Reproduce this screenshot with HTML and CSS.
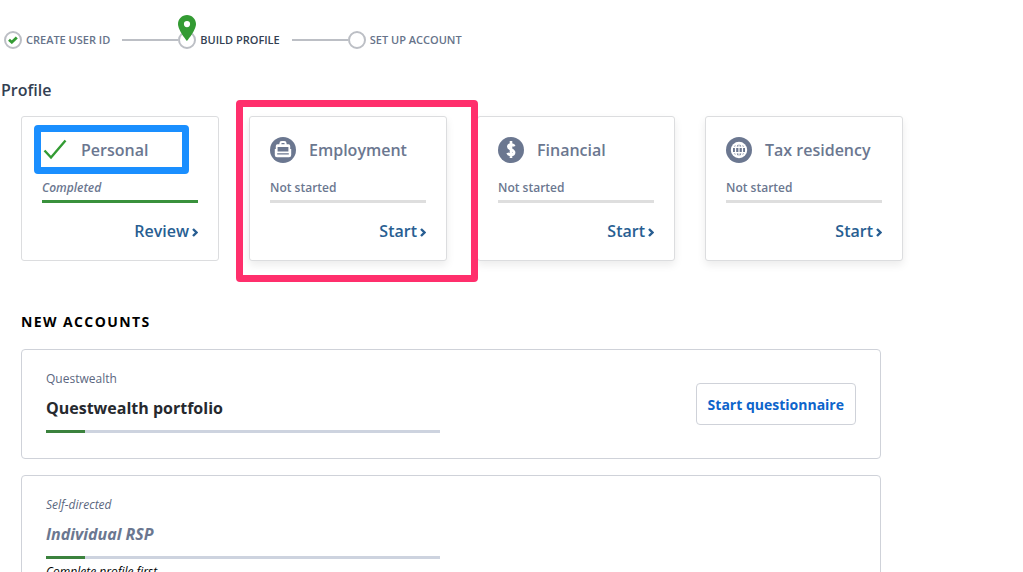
FILE: index.html
```
<!DOCTYPE html>
<html lang="en">
<head>
    <meta charset="UTF-8">
    <meta name="viewport" content="width=device-width, initial-scale=1.0">
    <title>Build Profile</title>
    <link rel="stylesheet" href="styles.css">
</head>
<body>
    <ol class="steps">
        <li class="step">
            <span class="step-dot">
                <svg width="10" height="8" viewBox="0 0 10 8"><path d="M1 3.8 L3.8 6.2 L8.8 1.4" fill="none" stroke="#339b33" stroke-width="2.8"/></svg>
            </span>
            <span class="step-label">CREATE USER ID</span>
        </li>
        <li class="step current">
            <span class="step-dot">
                <svg class="pin" width="18" height="26" viewBox="0 0 18 26"><path fill="#339b33" fill-rule="evenodd" d="M9 0 C4 0 0 4 0 9 C0 15.4 9 26 9 26 C9 26 18 15.4 18 9 C18 4 14 0 9 0 Z M9 6 A3.1 3.1 0 1 1 9 12.2 A3.1 3.1 0 1 1 9 6 Z"/></svg>
            </span>
            <span class="step-label">BUILD PROFILE</span>
        </li>
        <li class="step">
            <span class="step-dot"></span>
            <span class="step-label">SET UP ACCOUNT</span>
        </li>
    </ol>

    <h1>Profile</h1>

    <section class="cards">
        <div class="card done">
            <h2 class="card-title outlined">
                <svg width="26" height="26" viewBox="0 0 26 26"><path d="M2.5 13.5 L9 20.5 L23.5 3.5" fill="none" stroke="#339b33" stroke-width="2.4"/></svg>
                Personal
            </h2>
            <p class="status">Completed</p>
            <div class="bar"></div>
            <a class="card-link" href="#">Review <svg width="6" height="9" viewBox="0 0 6 9"><path d="M1 1 L4.5 4.5 L1 8" fill="none" stroke="currentColor" stroke-width="2.4"/></svg></a>
        </div>

        <div class="card highlighted">
            <h2 class="card-title">
                <svg width="26" height="26" viewBox="0 0 26 26">
                    <circle cx="13" cy="13" r="13" fill="#6b7790"/>
                    <path d="M10.4 8.5 V6.4 Q10.4 5 11.8 5 H14.2 Q15.6 5 15.6 6.4 V8.5" fill="none" stroke="#fff" stroke-width="2"/>
                    <path d="M7.4 7.2 H18.6 Q20.2 7.2 20.2 9 V12 H21.2 V18 Q21.2 20.2 19 20.2 H7 Q4.8 20.2 4.8 18 V12 H5.8 V9 Q5.8 7.2 7.4 7.2 Z" fill="#fff"/>
                    <path d="M7.6 10 H18.4 V14.4 H7.6 Z M7.2 16.2 H18.8 V17.6 H7.2 Z" fill="#6b7790"/>
                </svg>
                Employment
            </h2>
            <p class="status">Not started</p>
            <div class="bar"></div>
            <a class="card-link" href="#">Start <svg width="6" height="9" viewBox="0 0 6 9"><path d="M1 1 L4.5 4.5 L1 8" fill="none" stroke="currentColor" stroke-width="2.4"/></svg></a>
        </div>

        <div class="card">
            <h2 class="card-title">
                <svg width="26" height="26" viewBox="0 0 26 26">
                    <circle cx="13" cy="13" r="13" fill="#6b7790"/>
                    <path d="M16.2 9.3 C15.6 7.2 10.3 6.8 10.3 9.8 C10.3 12.8 16.1 11.9 16.1 15.5 C16.1 18.8 10.4 18.5 9.6 15.9 M13 4 V21" fill="none" stroke="#fff" stroke-width="2.6"/>
                </svg>
                Financial
            </h2>
            <p class="status">Not started</p>
            <div class="bar"></div>
            <a class="card-link" href="#">Start <svg width="6" height="9" viewBox="0 0 6 9"><path d="M1 1 L4.5 4.5 L1 8" fill="none" stroke="currentColor" stroke-width="2.4"/></svg></a>
        </div>

        <div class="card">
            <h2 class="card-title">
                <svg width="26" height="26" viewBox="0 0 26 26">
                    <circle cx="13" cy="13" r="13" fill="#6b7790"/>
                    <circle cx="13" cy="13" r="8.2" fill="#fff"/>
                    <path d="M11.2 11 H12.4 V15 H10.2 V11 Z M13.6 11 H15.8 V15 H13.6 Z M7 11 H8.9 V15 H7 Z M17.1 11 H19 V15 H17.1 Z M12.4 7.2 V9.6 H10.7 Q11.3 7.8 12.4 7.2 Z M13.6 7.2 V9.6 H15.3 Q14.7 7.8 13.6 7.2 Z M12.4 18.8 V16.4 H10.7 Q11.3 18.2 12.4 18.8 Z M13.6 18.8 V16.4 H15.3 Q14.7 18.2 13.6 18.8 Z M7.8 9.6 L9.6 7.9 L9.2 9.6 Z M18.2 9.6 L16.4 7.9 L16.8 9.6 Z M7.8 16.4 L9.6 18.1 L9.2 16.4 Z M18.2 16.4 L16.4 18.1 L16.8 16.4 Z" fill="#6b7790"/>
                </svg>
                Tax residency
            </h2>
            <p class="status">Not started</p>
            <div class="bar"></div>
            <a class="card-link" href="#">Start <svg width="6" height="9" viewBox="0 0 6 9"><path d="M1 1 L4.5 4.5 L1 8" fill="none" stroke="currentColor" stroke-width="2.4"/></svg></a>
        </div>
    </section>

    <section class="accounts">
        <h2 class="accounts-heading">NEW ACCOUNTS</h2>

        <div class="account">
            <div class="account-info">
                <p class="account-type">Questwealth</p>
                <h3>Questwealth portfolio</h3>
                <div class="progress"><div class="progress-fill" style="width: 10%"></div></div>
            </div>
            <button type="button" class="btn">Start questionnaire</button>
        </div>

        <div class="account pending">
            <div class="account-info">
                <p class="account-type">Self-directed</p>
                <h3>Individual RSP</h3>
                <div class="progress"><div class="progress-fill" style="width: 10%"></div></div>
                <p class="note">Complete profile first</p>
            </div>
        </div>
    </section>
</body>
</html>
```
FILE: styles.css
```
* {
    box-sizing: border-box;
}

body {
    font-family: "Open Sans", sans-serif;
    background-color: #fff;
    color: #333f52;
    margin: 0;
    overflow-x: hidden;
}

h1, h2, h3, p {
    margin: 0;
}

/* Stepper */
.steps {
    display: flex;
    list-style: none;
    margin: 0;
    padding: 31px 0 0 4px;
}

.step {
    display: flex;
    align-items: center;
    color: #66738a;
}

.step + .step::before {
    content: '';
    width: 56px;
    height: 2px;
    margin-left: 12px;
    background-color: #bcbfc5;
}

.step.current {
    color: #333f52;
}

.step-dot {
    position: relative;
    display: flex;
    align-items: center;
    justify-content: center;
    width: 18px;
    height: 18px;
    border: 2px solid #bcbfc5;
    border-radius: 50%;
}

.pin {
    position: absolute;
    left: -2px;
    bottom: 6px;
}

.step-label {
    margin-left: 4px;
    font-size: 11px;
    font-weight: 600;
    line-height: 18px;
}

h1 {
    margin: 29px 0 0 1px;
    font-size: 16px;
    font-weight: 600;
    line-height: 24px;
}

/* Profile cards */
.cards {
    display: grid;
    grid-template-columns: repeat(4, 1fr);
    gap: 30px;
    max-width: 882px;
    margin: 14px 21px 0;
}

.card {
    position: relative;
    padding: 20px 20px 17px;
    background-color: #fff;
    border: 1px solid #dcdddf;
    border-radius: 3px;
    box-shadow: 0 4px 8px rgba(0, 0, 0, 0.08);
}

.card.done {
    box-shadow: none;
}

.card-title {
    position: relative;
    display: flex;
    align-items: center;
    gap: 13px;
    color: #6b7790;
    font-size: 16px;
    font-weight: 600;
    line-height: 26px;
}

.status {
    margin-top: 17px;
    color: #6b7790;
    font-size: 12px;
    font-weight: 600;
    line-height: 16px;
}

.done .status {
    font-style: italic;
}

.bar {
    height: 3px;
    margin-top: 4px;
    background-color: #dedede;
}

.done .bar {
    background-color: #39913c;
}

.card-link {
    display: flex;
    align-items: center;
    justify-content: flex-end;
    gap: 3px;
    margin-top: 16px;
    color: #285e92;
    font-size: 16px;
    font-weight: 600;
    line-height: 24px;
    text-decoration: none;
}

.card-link svg {
    margin-top: 3px;
}

/* Marker frames drawn over the cards */
.outlined::after {
    content: '';
    position: absolute;
    inset: -12px 9px -11px -8px;
    border: 7px solid #1a8fff;
    border-radius: 4px;
}

.highlighted {
    z-index: 1;
}

.highlighted::after {
    content: '';
    position: absolute;
    inset: -17px -32px -22px -14px;
    border: 7px solid #ff2f6c;
    border-radius: 4px;
    pointer-events: none;
}

/* Accounts */
.accounts {
    max-width: 860px;
    margin: 49px 21px 0;
}

.accounts-heading {
    margin-bottom: 15px;
    color: #000;
    font-size: 14px;
    font-weight: 700;
    line-height: 24px;
    letter-spacing: 0.1em;
}

.account {
    display: flex;
    align-items: center;
    justify-content: space-between;
    margin-bottom: 16px;
    padding: 20px 24px;
    border: 1px solid #cfd2d9;
    border-radius: 4px;
}

.account-info {
    flex: 0 1 394px;
    padding-bottom: 5px;
}

.account-type {
    color: #5b6780;
    font-size: 12px;
    line-height: 18px;
}

.account h3 {
    margin: 8px 0 10px;
    color: #26292e;
    font-size: 16px;
    font-weight: 700;
    line-height: 24px;
}

.progress {
    height: 3px;
    background-color: #cdd3df;
}

.progress-fill {
    height: 3px;
    background-color: #3b823d;
}

.pending {
    font-style: italic;
}

.pending h3 {
    color: #6b7790;
}

.note {
    margin-top: 4px;
    color: #000;
    font-size: 12px;
    font-weight: 500;
    line-height: 18px;
}

.btn {
    height: 42px;
    padding: 0 11px;
    background-color: #fff;
    border: 1px solid #cfd2d9;
    border-radius: 4px;
    color: #0d64cb;
    font-family: inherit;
    font-size: 14px;
    font-weight: 700;
    cursor: pointer;
}
```
